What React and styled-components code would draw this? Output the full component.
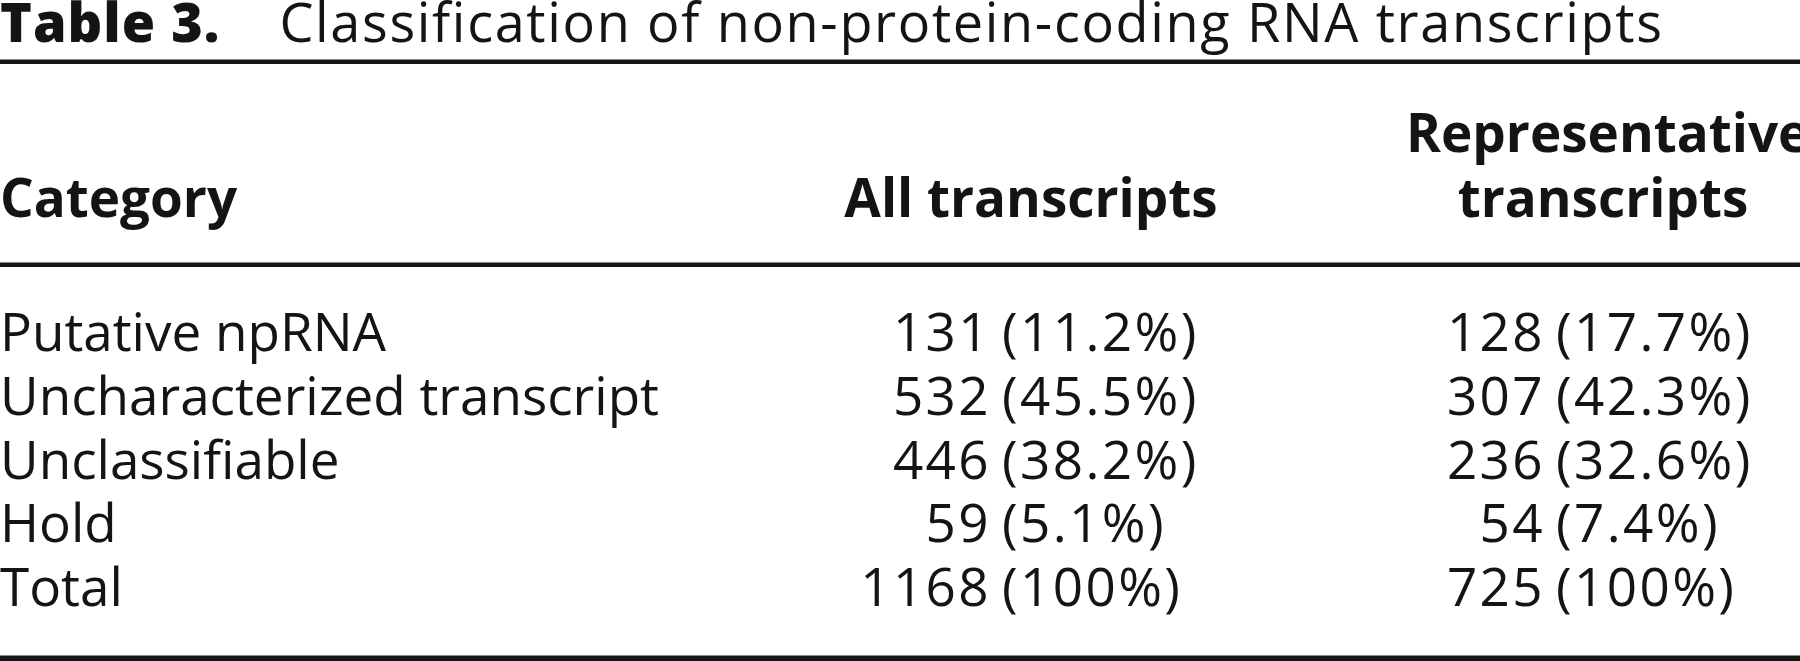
import React from "react";
import styled, { createGlobalStyle } from "styled-components";

const GlobalStyle = createGlobalStyle`
  html, body {
    margin: 0;
    padding: 0;
    background: #ffffff;
  }
  body {
    font-family: "Open Sans", "Noto Sans", "Liberation Sans", sans-serif;
    color: #141414;
  }
`;

const TableWrap = styled.div`
  width: 1800px;
  overflow: hidden;
`;

const Caption = styled.div`
  display: flex;
  gap: 59px;
  font-size: 54px;
  line-height: 40px;
  letter-spacing: 1.65px;
  white-space: nowrap;
  padding-top: 1px;
  padding-bottom: 18px;
`;

const CaptionLabel = styled.span`
  font-weight: 800;
  letter-spacing: 1px;
`;

const Rule = styled.div`
  height: ${(p) => p.size || 5}px;
  background: #161616;
  border-top: 1px solid #8a8a8a;
  box-sizing: border-box;
`;

const Row = styled.div`
  display: grid;
  grid-template-columns: 840px 382px 1fr 394px;
  font-size: 53px;
  line-height: ${(p) => p.lh || 63.75}px;
  white-space: nowrap;
`;

const HeadRow = styled(Row)`
  font-weight: 700;
  padding: 35px 0 33px;
  align-items: end;
`;

const HeadCell = styled.div`
  grid-column: ${(p) => p.col};
  text-align: ${(p) => p.align || "center"};
`;

const Body = styled.div`
  padding: 32px 0 37px;
`;

const NumCell = styled.div`
  grid-column: ${(p) => p.col};
  display: flex;
  letter-spacing: 2.4px;
`;

const Count = styled.span`
  width: ${(p) => p.w}px;
  text-align: right;
  flex: none;
`;

const Pct = styled.span`
  margin-left: 11px;
`;

const rows = [
  ["Putative npRNA", "131", "(11.2%)", "128", "(17.7%)"],
  ["Uncharacterized transcript", "532", "(45.5%)", "307", "(42.3%)"],
  ["Unclassifiable", "446", "(38.2%)", "236", "(32.6%)"],
  ["Hold", "59", "(5.1%)", "54", "(7.4%)"],
  ["Total", "1168", "(100%)", "725", "(100%)"],
];

const App = () => {
  return (
    <>
      <GlobalStyle />
      <TableWrap>
        <Caption>
          <CaptionLabel>Table 3.</CaptionLabel>
          <span>Classification of non-protein-coding RNA transcripts</span>
        </Caption>
        <Rule />
        <HeadRow lh={65}>
          <HeadCell col={1} align="left">
            Category
          </HeadCell>
          <HeadCell col={2}>All transcripts</HeadCell>
          <HeadCell col={4}>
            Representative
            <br />
            transcripts
          </HeadCell>
        </HeadRow>
        <Rule />
        <Body>
          {rows.map((r, index) => (
            <Row key={index}>
              <div>{r[0]}</div>
              <NumCell col={2}>
                <Count w={151}>{r[1]}</Count>
                <Pct>{r[2]}</Pct>
              </NumCell>
              <NumCell col={4}>
                <Count w={139}>{r[3]}</Count>
                <Pct>{r[4]}</Pct>
              </NumCell>
            </Row>
          ))}
        </Body>
        <Rule size={6} />
      </TableWrap>
    </>
  );
};

export default App;
